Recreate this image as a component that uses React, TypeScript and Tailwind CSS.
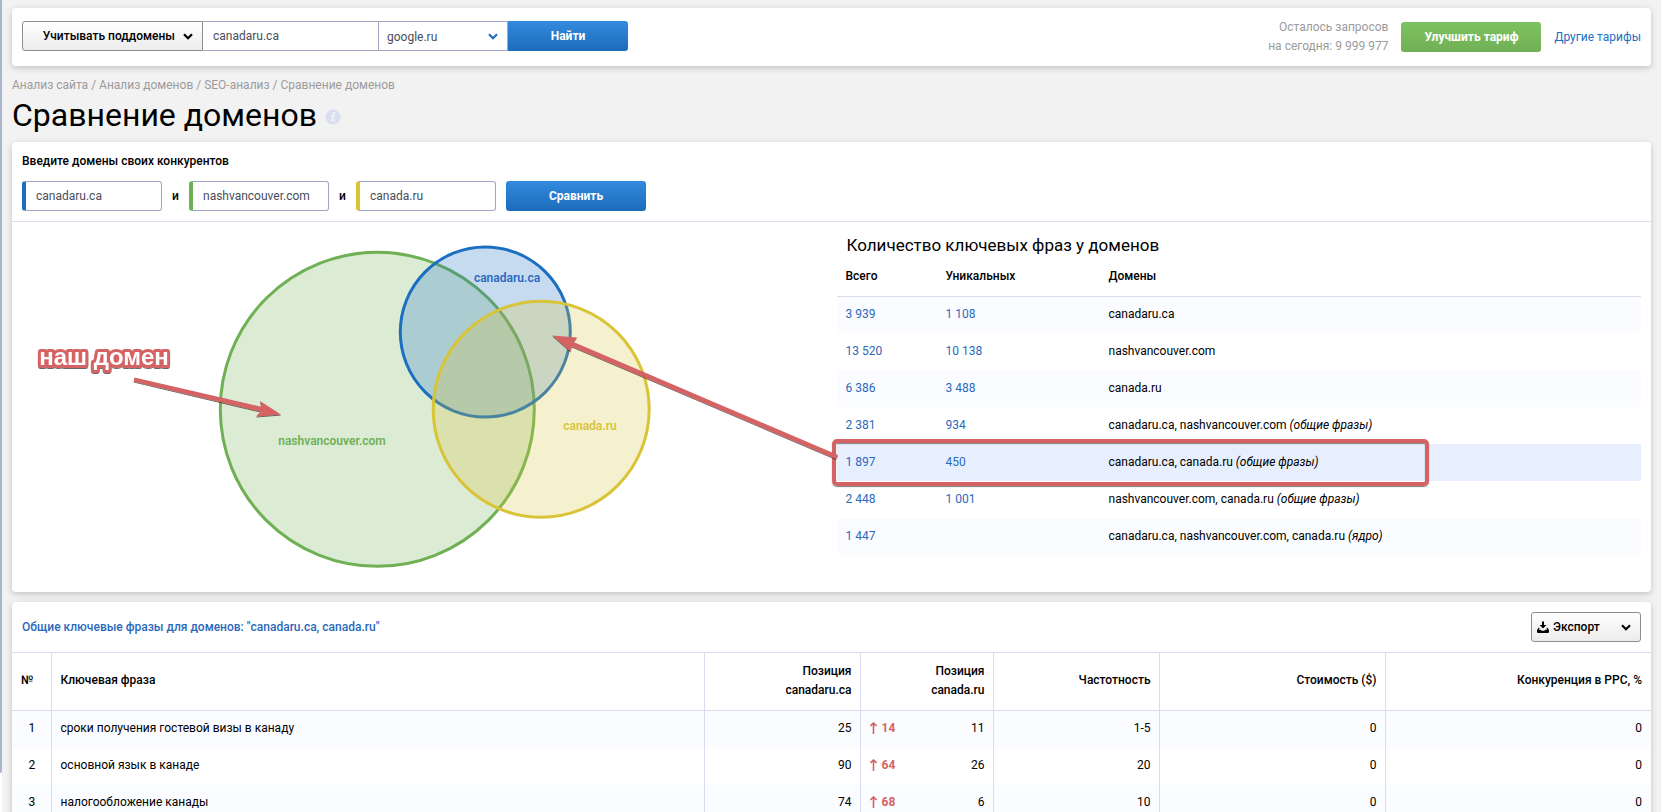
import type { ReactNode } from "react";

type DomainRow = {
  total: string;
  unique: string;
  domains: string;
  note?: string;
};

type PhraseRow = {
  phrase: string;
  first: number;
  diff: number;
  second: number;
  frequency: string;
};

const domainRows: DomainRow[] = [
  { total: "3 939", unique: "1 108", domains: "canadaru.ca" },
  { total: "13 520", unique: "10 138", domains: "nashvancouver.com" },
  { total: "6 386", unique: "3 488", domains: "canada.ru" },
  { total: "2 381", unique: "934", domains: "canadaru.ca, nashvancouver.com", note: "(общие фразы)" },
  { total: "1 897", unique: "450", domains: "canadaru.ca, canada.ru", note: "(общие фразы)" },
  { total: "2 448", unique: "1 001", domains: "nashvancouver.com, canada.ru", note: "(общие фразы)" },
  { total: "1 447", unique: "", domains: "canadaru.ca, nashvancouver.com, canada.ru", note: "(ядро)" },
];

const SELECTED_ROW = 4;

const phraseRows: PhraseRow[] = [
  { phrase: "сроки получения гостевой визы в канаду", first: 25, diff: 14, second: 11, frequency: "1-5" },
  { phrase: "основной язык в канаде", first: 90, diff: 64, second: 26, frequency: "20" },
  { phrase: "налогообложение канады", first: 74, diff: 68, second: 6, frequency: "10" },
];

const competitors = [
  { domain: "canadaru.ca", color: "border-l-[#1b6fc2]" },
  { domain: "nashvancouver.com", color: "border-l-[#6fb054]" },
  { domain: "canada.ru", color: "border-l-[#d9c437]" },
];

function Chevron({ className }: { className?: string }) {
  return (
    <svg width="10" height="7" viewBox="0 0 10 7" fill="none" className={className}>
      <path d="M1 1.2 L5 5.2 L9 1.2" stroke="currentColor" strokeWidth="2.2" />
    </svg>
  );
}

function DownloadIcon() {
  return (
    <svg width="12" height="12" viewBox="0 0 12 12" fill="currentColor">
      <path d="M5 0.500h2V4h2.400L6 7.600 2.600 4H5z" />
      <path d="M1.400 6.800h1.200L1.900 8.700h1.900l.9 1h2.600l.9-1h1.900l-.7-1.900h1.200L12 9.200v1.900c0 .5-.3.800-.8.800H.8c-.5 0-.8-.3-.8-.8V9.200z" />
    </svg>
  );
}

function InfoIcon() {
  return (
    <svg width="16" height="16" viewBox="0 0 16 16" className="mt-1">
      <circle cx="8" cy="8" r="7.600" fill="#d9dfef" />
      <path
        d="M8.200 2.800h2.200l-.5 2.100H7.700zM6.100 6h3.700l-1.100 4.700h1.100l-.3 1.500H5.700l.3-1.500h.8l.7-3.200h-1.700z"
        fill="#f4f4f6"
      />
    </svg>
  );
}

function Card({ children }: { children: ReactNode }) {
  return (
    <section className="rounded bg-white shadow-[0_2px_6px_rgba(0,0,0,0.2)]">{children}</section>
  );
}

function VennDiagram() {
  return (
    <svg width="804" height="360" viewBox="22 222 804 360" className="relative overflow-visible">
      <defs>
        <filter id="soft" x="-10%" y="-10%" width="120%" height="130%">
          <feDropShadow dx="0" dy="1" stdDeviation="0.5" floodColor="#000" floodOpacity="0.6" />
        </filter>
      </defs>

      <g strokeWidth="3" fillOpacity="0.25">
        <circle cx="377.300" cy="409.300" r="157" fill="#6fb054" stroke="#6fb054" />
        <circle cx="485.300" cy="332" r="85" fill="#1b6fc2" stroke="#1b6fc2" />
        <circle cx="541.200" cy="409.300" r="108" fill="#d9c437" stroke="#d9c437" />
      </g>

      <g fontSize="12" fontWeight="600" textAnchor="middle">
        <text x="507" y="282" fill="#2a69bd">canadaru.ca</text>
        <text x="332" y="445" fill="#6fb054">nashvancouver.com</text>
        <text x="590" y="430" fill="#d9c437">canada.ru</text>
      </g>

      <g filter="url(#soft)" fill="#d66364">
        <path d="M134.500 377.500 L261.300 406.700 L260 401 L281 414.500 L256 416.500 L260.500 411.500 L133.700 381.500 Z" />
        <path d="M552.300 335.500 L577 337.500 L573.500 342 L838 455 L836 459 L571.800 346.500 L570.500 351.500 Z" />
        <text
          x="104"
          y="365"
          textAnchor="middle"
          fontSize="24"
          fontWeight="700"
          fontFamily="Liberation Sans, sans-serif"
          fill="#fff"
          stroke="#d66364"
          strokeWidth="6"
          strokeLinejoin="round"
          paintOrder="stroke"
        >
          наш домен
        </text>
      </g>
    </svg>
  );
}

function SearchBar() {
  return (
    <Card>
      <div className="flex h-[58px] items-center justify-between px-2.5">
        <form className="mb-0.5 flex h-[30px]" onSubmit={(e) => e.preventDefault()}>
          <button
            type="button"
            className="flex w-[181px] items-center justify-end gap-2 rounded-l-[3px] border border-[#8d8d8d] bg-linear-to-b from-white to-[#ececec] pr-[9px] font-medium"
          >
            Учитывать поддомены
            <Chevron />
          </button>
          <input
            aria-label="Домен"
            defaultValue="canadaru.ca"
            className="w-[175px] border-y border-[#a0a6c1] px-2.5 text-[#4a4d5c]"
          />
          <div className="relative flex w-[130px]">
            <select
              aria-label="Поисковая система"
              className="w-full appearance-none border border-[#a0a6c1] px-2 pt-0.5 text-[#4a4d5c]"
            >
              <option>google.ru</option>
            </select>
            <Chevron className="pointer-events-none absolute top-3 right-2.5 text-[#1b6fc2]" />
          </div>
          <button className="w-30 rounded-r-[3px] bg-linear-to-b from-[#338ade] to-[#1b6cbb] font-bold text-white">
            Найти
          </button>
        </form>

        <div className="flex items-center gap-[13px]">
          <p className="text-right leading-[19px] text-[#9b9b9b]">
            Осталось запросов
            <br />
            на сегодня: 9 999 977
          </p>
          <button className="h-[30px] w-[140px] rounded-[3px] bg-linear-to-b from-[#7dc361] to-[#71af55] font-bold text-white">
            Улучшить тариф
          </button>
          <a href="#" className="text-[#1b6fc2]">
            Другие тарифы
          </a>
        </div>
      </div>
    </Card>
  );
}

function DomainTable() {
  return (
    <div>
      <h2 className="mt-[11px] mb-px pl-2.5 text-[17px] leading-6">Количество ключевых фраз у доменов</h2>
      <table className="w-full text-left">
        <thead>
          <tr className="h-[38px] border-b border-[#d9dcec]">
            <th className="w-[100px] pb-0.5 pl-[9px] font-medium">Всего</th>
            <th className="w-[163px] pb-0.5 pl-[9px] font-medium">Уникальных</th>
            <th className="pb-0.5 pl-[9px] font-medium">Домены</th>
          </tr>
        </thead>
        <tbody>
          {domainRows.map((row, i) => (
            <tr
              key={row.total}
              className={`relative h-[37px] ${i === SELECTED_ROW ? "bg-[#e7effe]" : "odd:bg-[#fafcff]"}`}
            >
              <td className="pb-0.5 pl-[9px]">
                <a href="#" className="text-[#2a69bd]">{row.total}</a>
                {i === SELECTED_ROW && (
                  <span className="pointer-events-none absolute -top-[5px] -left-[5px] h-[47px] w-[597px] rounded-[5px] border-4 border-[#d66364] shadow-[0_1px_1px_rgba(0,0,0,0.5),inset_0_1px_1px_rgba(0,0,0,0.5)]" />
                )}
              </td>
              <td className="pb-0.5 pl-[9px]">
                <a href="#" className="text-[#2a69bd]">{row.unique}</a>
              </td>
              <td className="pb-0.5 pl-[9px]">
                {row.domains} {row.note && <em>{row.note}</em>}
              </td>
            </tr>
          ))}
        </tbody>
      </table>
    </div>
  );
}

function PhraseTable() {
  const cell = "border-r border-[#d9dcec] pr-2 pb-0.5 pl-[9px] last:border-r-0 last:pr-[9px]";

  return (
    <table className="w-full table-fixed text-right">
      <thead>
        <tr className="h-[58px] border-y border-[#d9dcec] leading-[19px]">
          <th className={`w-[39px] text-left font-medium ${cell}`}>№</th>
          <th className={`text-left font-medium ${cell}`}>Ключевая фраза</th>
          <th className={`w-[156px] font-medium ${cell}`}>
            Позиция
            <br />
            canadaru.ca
          </th>
          <th className={`w-[133px] font-medium ${cell}`}>
            Позиция
            <br />
            canada.ru
          </th>
          <th className={`w-[166px] font-medium ${cell}`}>Частотность</th>
          <th className={`w-[226px] font-medium ${cell}`}>Стоимость ($)</th>
          <th className={`w-[266px] font-medium ${cell}`}>Конкуренция в PPC, %</th>
        </tr>
      </thead>
      <tbody>
        {phraseRows.map((row, i) => (
          <tr key={row.phrase} className="h-[37px] odd:bg-[#fafcff]">
            <td className={`text-center ${cell}`}>{i + 1}</td>
            <td className={`text-left ${cell}`}>{row.phrase}</td>
            <td className={cell}>{row.first}</td>
            <td className={cell}>
              <div className="flex items-center justify-between">
                <span className="flex items-center gap-[5px] font-bold text-[#d66364]">
                  <svg width="7" height="12" viewBox="0 0 7 12" fill="none" stroke="currentColor">
                    <path d="M3.500 12V1.500M.5 4 3.500 1l3 3" strokeWidth="1.600" />
                  </svg>
                  {row.diff}
                </span>
                {row.second}
              </div>
            </td>
            <td className={cell}>{row.frequency}</td>
            <td className={cell}>0</td>
            <td className={cell}>0</td>
          </tr>
        ))}
      </tbody>
    </table>
  );
}

function App() {
  return (
    <div className="relative h-screen overflow-hidden bg-[#f2f2f2] pt-2 pr-2.5 pl-3 font-[Roboto,sans-serif] text-xs text-black">
      {/* Edge of the collapsed side menu */}
      <div className="absolute top-0 bottom-0 left-0 w-0.5 bg-white">
        <div className="h-[773px] rounded-br-sm bg-[#a9b4cf]" />
      </div>

      <SearchBar />

      <nav className="mt-2.5 leading-[18px] text-[#9b9b9b]">
        <a href="#">Анализ сайта</a> / <a href="#">Анализ доменов</a> / <a href="#">SEO-анализ</a> / Сравнение
        доменов
      </nav>
      <h1 className="mt-[3px] mb-[9px] flex items-center gap-2 text-[32px] leading-9">
        Сравнение доменов
        <InfoIcon />
      </h1>

      <Card>
        <form
          className="border-b border-[#d9dcec] px-2.5 pt-2.5 pb-2.5"
          onSubmit={(e) => e.preventDefault()}
        >
          <p className="mb-2.5 leading-[19px] font-medium">Введите домены своих конкурентов</p>
          <div className="flex items-center">
            {competitors.map((item, i) => (
              <div key={item.domain} className="flex items-center">
                {i > 0 && <span className="w-[27px] text-center font-medium">и</span>}
                <input
                  aria-label={`Домен ${i + 1}`}
                  defaultValue={item.domain}
                  className={`h-[30px] w-[140px] rounded-[3px] border border-l-4 border-[#a0a6c1] px-2.5 text-[#4a4d5c] ${item.color}`}
                />
              </div>
            ))}
            <button className="ml-2.5 h-[30px] w-[140px] rounded-[3px] bg-linear-to-b from-[#338ade] to-[#1b6cbb] font-bold text-white">
              Сравнить
            </button>
          </div>
        </form>

        <div className="grid h-[370px] grid-cols-2 gap-2.5 px-2.5">
          <div className="z-10">
            <VennDiagram />
          </div>
          <DomainTable />
        </div>
      </Card>

      <div className="mt-2.5">
        <Card>
          <div className="flex h-[50px] items-center justify-between px-2.5">
            <h2 className="font-medium text-[#2a69bd]">
              Общие ключевые фразы для доменов: "canadaru.ca, canada.ru"
            </h2>
            <button className="flex h-[30px] w-[110px] items-center gap-1 rounded-[3px] border border-[#8d8d8d] bg-linear-to-b from-white to-[#ececec] px-[5px] font-medium">
              <DownloadIcon />
              Экспорт
              <Chevron className="mr-1 ml-auto" />
            </button>
          </div>
          <PhraseTable />
        </Card>
      </div>
    </div>
  );
}

export default App;
